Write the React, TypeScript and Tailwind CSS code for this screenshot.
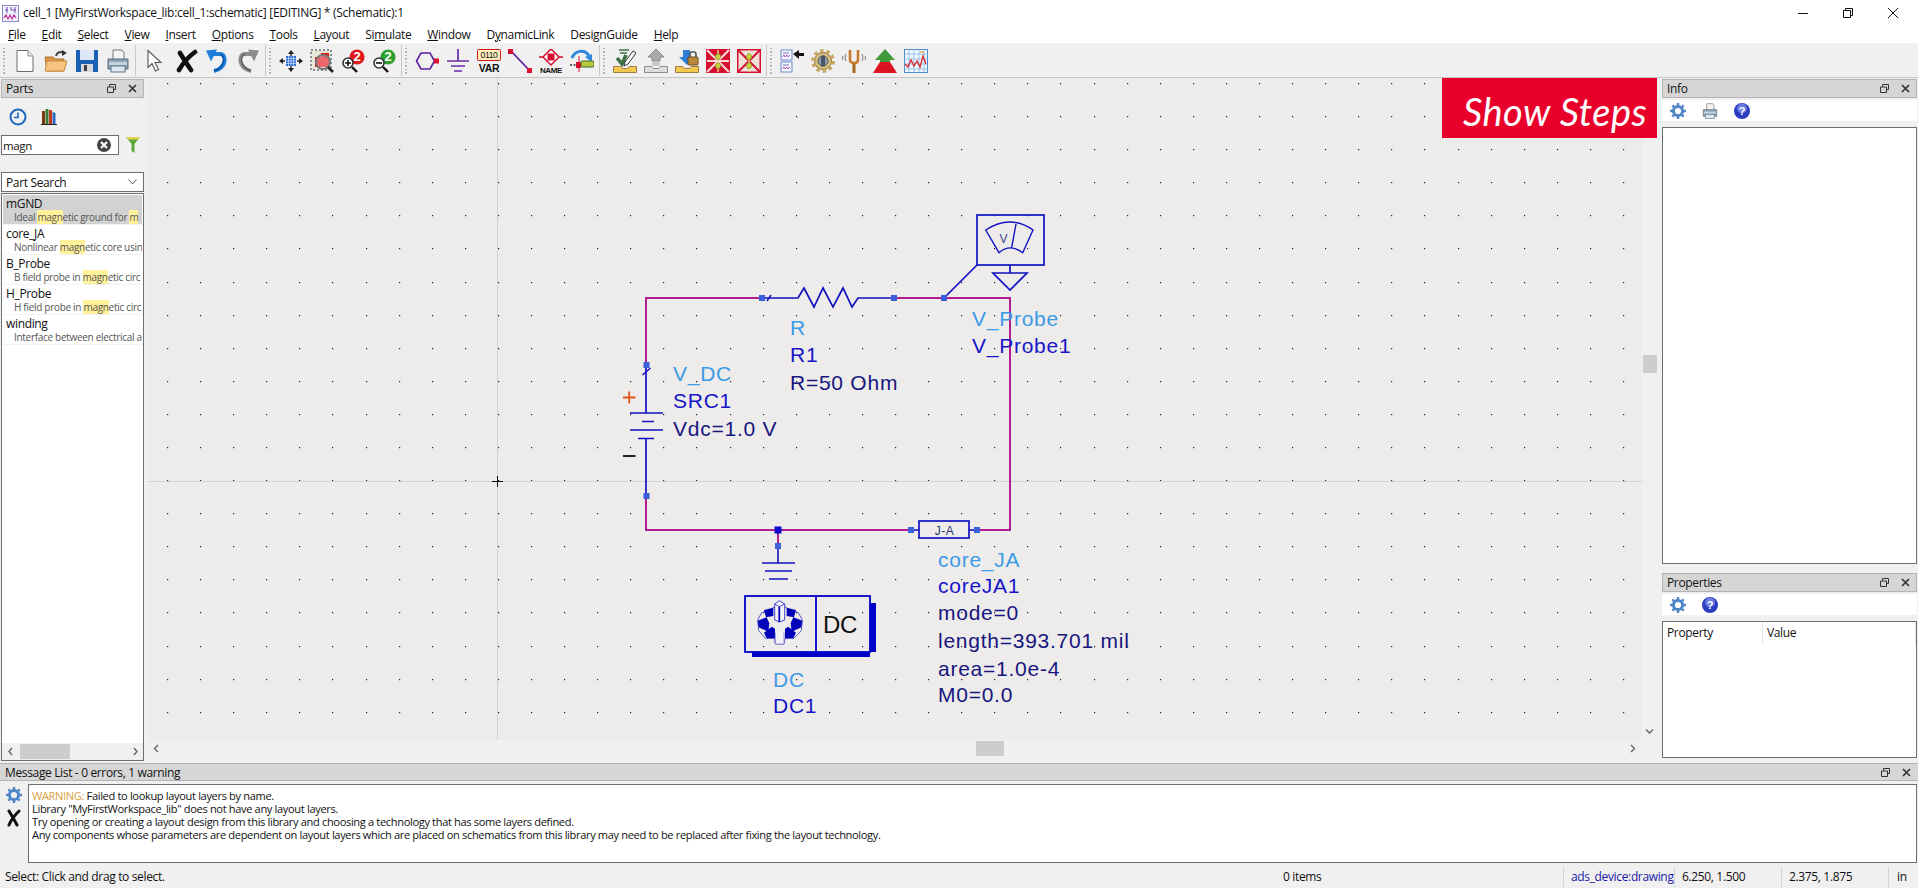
import React from "react";

const Svg = ({ children, w = 24, h = 24 }: { children: React.ReactNode; w?: number; h?: number }) => (
  <svg width={w} height={h} viewBox={`0 0 ${w} ${h}`} className="block shrink-0">{children}</svg>
);

const AppIcon = () => (
  <svg width="17" height="17" viewBox="0 0 17 17" className="block shrink-0">
    <rect x="0.5" y="0.5" width="16" height="16" fill="#eef2fb" stroke="#8a8ac8" />
    <path d="M3 5h3M5 2v6M9 2v3M9 5h5M13 2v6" stroke="#7a4ab0" strokeWidth="1" fill="none" />
    <path d="M2 13l2-3 2 4 2-4 2 4 2-4 2 3" stroke="#c0309a" strokeWidth="1.2" fill="none" />
  </svg>
);

const Doc = () => (
  <Svg>
    <path d="M4 1.5h11l5 5.5v15.5H4z" fill="#fff" stroke="#6d6d6d" />
    <path d="M15 1.5V7h5" fill="#eee" stroke="#8a8a8a" />
  </Svg>
);
const Open = () => (
  <Svg>
    <path d="M1 8h8l2 2h9v12H3z" fill="#d9964a" stroke="#a9742e" />
    <path d="M3 12h20l-3 10H1z" fill="#f6c47c" stroke="#c58a3e" />
    <path d="M12 7c1-4 5-5 8-3" stroke="#444" strokeWidth="2" fill="none" />
    <path d="M18 1l5 3-5 3z" fill="#333" />
  </Svg>
);
const Save = () => (
  <Svg>
    <path d="M1 1h22v22H1z" fill="#1a5fb4" />
    <rect x="5" y="1" width="14" height="10" fill="#dce8f5" />
    <rect x="6" y="15" width="12" height="8" fill="#d9d9d9" />
    <rect x="9" y="16" width="3" height="6" fill="#3a3a4a" />
  </Svg>
);
const Printer = ({ s = 24 }: { s?: number }) => (
  <svg width={s} height={s} viewBox="0 0 24 24" className="block shrink-0">
    <path d="M7 1h9l2 3v8H7z" fill="#f4f4f4" stroke="#777" />
    <path d="M2 10h20v10H2z" fill="#8fa3b3" stroke="#55687a" />
    <rect x="3" y="13" width="18" height="3" fill="#c7d3dc" />
    <rect x="5" y="17" width="14" height="6" fill="#dfe8ee" stroke="#5d7890" />
  </svg>
);
const Pointer = () => (
  <Svg>
    <path d="M5 1.5v17l4-4 3.5 7.5 3-1.5-3.5-7h6z" fill="#fff" stroke="#555" strokeWidth="1.1" />
  </Svg>
);
const BigX = () => (
  <Svg>
    <path d="M5 21C9 14 14 8 21 3M6 4c3 5 7 11 11 17" stroke="#111" strokeWidth="4.6" strokeLinecap="round" fill="none" />
  </Svg>
);
const Undo = ({ c = "#1c7fd8", d = "#0d4fa0", flip = false }: { c?: string; d?: string; flip?: boolean }) => (
  <Svg>
    <g transform={flip ? "translate(24 0) scale(-1 1)" : undefined}>
      <path d="M7 5h8c7 0 7 14-6 17" stroke={c} strokeWidth="4" fill="none" />
      <path d="M1 1.5l11-1-6 12z" fill={c} />
      <path d="M15 5c6 2 5 13-6 17" stroke={d} strokeWidth="1.4" fill="none" />
    </g>
  </Svg>
);
const Fit = () => (
  <Svg>
    <path d="M12 1l3 4H9zM12 23l3-4H9zM0 12l4-3v6zM24 12l-4-3v6z" fill="#222" />
    <path d="M12 4v3M12 17v3M3 12h3M18 12h3" stroke="#222" strokeWidth="1.4" />
    <rect x="7" y="7" width="10" height="10" fill="#2d6fd0" />
    <path d="M9.5 7v10M12 7v10M14.5 7v10M7 9.5h10M7 12h10M7 14.5h10" stroke="#cfe0ff" strokeWidth="0.7" />
  </Svg>
);
const ZoomArea = () => (
  <Svg>
    <rect x="1" y="1" width="20" height="20" fill="#e8e8d8" stroke="#234" strokeDasharray="2 2" />
    <path d="M5 8h6V4h8v14H5z" fill="#e0161e" />
    <circle cx="13" cy="13" r="7" fill="#ffffff" fillOpacity="0.35" stroke="#777" strokeWidth="2" />
    <path d="M18 18l5 5" stroke="#222" strokeWidth="2.6" />
  </Svg>
);
const ZoomN = ({ c, sign }: { c: string; sign: string }) => (
  <Svg>
    <circle cx="16" cy="8" r="7.6" fill={c} />
    <text x="16" y="12.4" textAnchor="middle" fontSize="13" fontWeight="700" fill="#fff" fontFamily="Liberation Sans">2</text>
    <circle cx="7" cy="14" r="5" fill="#fff" stroke="#333" strokeWidth="1.6" />
    <path d={sign === "+" ? "M4 14h6M7 11v6" : "M4 14h6"} stroke="#111" strokeWidth="1.6" />
    <path d="M11 18l5 5" stroke="#111" strokeWidth="2.4" />
  </Svg>
);
const Hex = () => (
  <Svg>
    <path d="M1.5 12l4.5-8h9l4.5 8-4.5 8H6z" fill="none" stroke="#5d1f9e" strokeWidth="1.6" />
    <rect x="19" y="9.5" width="5" height="5" fill="#e01030" />
  </Svg>
);
const Gnd = () => (
  <Svg>
    <path d="M12 0v12M1 12h22M5 17h14M8 22h8" stroke="#6a2aa8" strokeWidth="1.7" />
  </Svg>
);
const Var = () => (
  <Svg>
    <rect x="0.5" y="0.5" width="23" height="11" rx="1" fill="#ffefc0" stroke="#d01818" />
    <text x="12" y="9.4" textAnchor="middle" fontSize="8.6" fill="#111" fontFamily="Liberation Sans">0110</text>
    <text x="12" y="22.5" textAnchor="middle" fontSize="10.5" fontWeight="700" fill="#111" fontFamily="Liberation Sans">VAR</text>
  </Svg>
);
const Wire = () => (
  <Svg>
    <path d="M3 2l19 20" stroke="#5d1f9e" strokeWidth="1.8" />
    <rect x="0" y="0" width="5" height="5" fill="#e01030" />
    <rect x="19" y="19" width="5" height="5" fill="#e01030" />
  </Svg>
);
const NameI = () => (
  <Svg>
    <path d="M0 8h5M19 8h5" stroke="#d01030" strokeWidth="1.6" />
    <path d="M12 0l8 8-8 8-8-8z" fill="#fff" stroke="#d01030" strokeWidth="1.5" />
    <rect x="8.5" y="4.5" width="7" height="7" fill="#d81030" />
    <text x="12" y="23.5" textAnchor="middle" fontSize="8" fontWeight="700" fill="#111" fontFamily="Liberation Sans">NAME</text>
  </Svg>
);
const PortArrow = () => (
  <Svg>
    <path d="M2 9c3-8 13-9 17-2" stroke="#2f8ad8" strokeWidth="3" fill="none" />
    <path d="M15 8l7-3v8z" fill="#2f8ad8" />
    <path d="M0 16h8" stroke="#333" strokeWidth="1.4" strokeDasharray="2 1.5" />
    <rect x="6" y="13" width="5" height="6" fill="#d81030" />
    <path d="M9 7v16" stroke="#d81030" strokeWidth="1" />
    <rect x="11" y="12" width="13" height="6" rx="1" fill="#b8c83c" stroke="#3a6a2a" />
  </Svg>
);
const Tray = ({ c }: { c: string }) => <path d="M0.5 17.5h7l2 2h5l2-2h7v6H.5z" fill={c} stroke="#a07a4a" />;
const Check = () => (
  <Svg>
    <Tray c="#f2c84e" />
    <path d="M4 9l5 6L13 6" stroke="#3d6e45" strokeWidth="3.5" fill="none" />
    <path d="M6 1h10M7 4h7" stroke="#3d6e45" strokeWidth="1.5" />
    <path d="M12 13l8-11 3 2-8 11-4 2z" fill="#fff" stroke="#333" />
  </Svg>
);
const Up = () => (
  <Svg>
    <path d="M0.5 17.5h7l2 2h5l2-2h7v6H.5z" fill="#dcdcdc" stroke="#8f8f8f" />
    <path d="M12 0l8 8h-4v4H8V8H4z" fill="#a9a9a9" stroke="#8a8a8a" />
    <path d="M8 14h8M8 16h8" stroke="#a9a9a9" />
  </Svg>
);
const Down = () => (
  <Svg>
    <Tray c="#f2c84e" />
    <path d="M8 1h7v7h4l-7 8-8-8h4z" fill="#2f7fd8" />
    <rect x="13" y="8" width="10" height="8" rx="1" fill="#b88a3a" stroke="#6a4a1a" />
    <path d="M15 8V5c0-3 6-3 6 0v3" stroke="#555" strokeWidth="1.6" fill="none" />
  </Svg>
);
const RedBox = ({ wide }: { wide?: boolean }) => (
  <Svg>
    <rect x="0" y="0" width="24" height="24" fill="#d60f2e" />
    <rect x="1.5" y="1.5" width="21" height="21" fill={wide ? "#efe0d8" : "#d60f2e"} />
    <path d="M1 1l22 22M23 1L1 23" stroke={wide ? "#d60f2e" : "#ffd9d9"} strokeWidth="2" />
    {!wide && <path d="M1 12h22" stroke="#ffd9d9" strokeWidth="2" />}
    <path d="M12 1v22" stroke="#e8d8a0" strokeWidth="1.4" />
    <rect x="9.5" y="5" width="5" height="5.5" rx="2" fill="#c8d040" stroke="#7a8a20" strokeWidth="0.6" />
    <rect x="9.5" y="14" width="5" height="5.5" rx="2" fill="#c8d040" stroke="#7a8a20" strokeWidth="0.6" />
  </Svg>
);
const Cells = () => (
  <Svg>
    <rect x="1" y="1" width="11" height="10" fill="#f4f6ff" stroke="#6a8ac8" />
    <rect x="1" y="13" width="11" height="10" fill="#f4f6ff" stroke="#6a8ac8" />
    <path d="M2 8l2-2 1 2 2-2 1 2 2-2M2 20l2-2 1 2 2-2 1 2 2-2" stroke="#9a3aa8" fill="none" strokeWidth="0.8" />
    <path d="M3 4h6M3 16h6" stroke="#6a4ab0" strokeWidth="0.8" />
    <path d="M13 5l6-4v3h5v3h-5v3z" fill="#111" />
  </Svg>
);
const GearTan = () => (
  <Svg>
    <circle cx="12" cy="12" r="8.5" fill="#d8c080" stroke="#8a7038" strokeWidth="1" />
    <circle cx="12" cy="12" r="10.2" fill="none" stroke="#c8a860" strokeWidth="3.4" strokeDasharray="3.4 3" />
    <circle cx="12" cy="12" r="5" fill="#8f9db0" stroke="#5a5a4a" />
    <rect x="10" y="6.5" width="4" height="11" rx="1.2" fill="#49566a" />
  </Svg>
);
const Fork = () => (
  <Svg>
    <path d="M8 1v10c0 4 8 4 8 0V1" stroke="#c87a2a" strokeWidth="2.6" fill="none" />
    <path d="M12 15v9" stroke="#a8681e" strokeWidth="3" />
    <path d="M4 5c-1 2-1 5 0 7M1 7c-.6 1-.6 3 0 4M20 5c1 2 1 5 0 7M23 7c.6 1 .6 3 0 4" stroke="#888" strokeWidth="1.1" fill="none" />
  </Svg>
);
const Tree = () => (
  <Svg>
    <path d="M12 0l10 11h-5v3H7v-3H2z" fill="#3f9a3a" />
    <path d="M7 13h10l7 11H0z" fill="#e01424" />
    <path d="M4 18h16M2 21h20" stroke="#b00c18" strokeWidth="0.7" strokeDasharray="1.5 1" />
  </Svg>
);
const Graph = () => (
  <Svg>
    <rect x="0.5" y="0.5" width="23" height="23" fill="#f2f8ff" stroke="#4a8ad0" />
    <path d="M5 0v24M10 0v24M15 0v24M20 0v24M0 5h24M0 10h24M0 15h24M0 20h24" stroke="#7ab0e0" strokeWidth="0.7" />
    <path d="M1 15l3 3 3-7 3 6 3-5 3 6 3-11 3 8" stroke="#d83030" strokeWidth="1.4" fill="none" />
    <path d="M16 3h4" stroke="#d8a030" strokeWidth="1.2" />
  </Svg>
);

const Grip = () => (
  <div className="flex flex-col gap-[2px] w-[3px] ml-[3px] mr-[7px]">
    {Array.from({ length: 8 }).map((_, i) => (
      <span key={i} className="block w-[2px] h-[1.5px] bg-[#b4b4b4]" />
    ))}
  </div>
);
const Sep = () => <div className="w-px h-[31px] bg-[#c8c8c8] ml-[5px]" />;
const Ic = ({ children }: { children: React.ReactNode }) => <div className="w-6 h-6 shrink-0">{children}</div>;
const Group = ({ children }: { children: React.ReactNode }) => <div className="flex items-center gap-[7px]">{children}</div>;

const menus: [string, string, string][] = [
  ["", "F", "ile"], ["", "E", "dit"], ["", "S", "elect"], ["", "V", "iew"], ["", "I", "nsert"],
  ["", "O", "ptions"], ["", "T", "ools"], ["", "L", "ayout"], ["Si", "m", "ulate"], ["", "W", "indow"],
  ["D", "y", "namicLink"], ["DesignGuide", "", ""], ["", "H", "elp"],
];

const FloatIcon = () => (
  <svg width="9" height="9" viewBox="0 0 9 9" className="block">
    <path d="M2.5 2.5V.5h6v5h-2M.5 3h6v5.5h-6z" fill="none" stroke="#333" />
  </svg>
);
const CloseIcon = () => (
  <svg width="9" height="9" viewBox="0 0 9 9" className="block">
    <path d="M1 1l7 7M8 1L1 8" stroke="#333" strokeWidth="1.7" />
  </svg>
);
const PanelHead = ({ title, low = true }: { title: string; low?: boolean }) => (
  <div className="flex items-center h-[19px] bg-[#d6d6d6] border border-[#b4b4b4] pl-1 pr-[6px] text-[12px] text-[#111]">
    <span className={`flex-1 ${low ? "pt-[1px]" : ""}`}>{title}</span>
    <span className="mr-3"><FloatIcon /></span>
    <CloseIcon />
  </div>
);
const Gear = ({ s = 16 }: { s?: number }) => (
  <svg width={s} height={s} viewBox="0 0 16 16" className="block shrink-0">
    <circle cx="8" cy="8" r="4.6" fill="none" stroke="#4f86c6" strokeWidth="3" />
    <path d="M8 0v3M8 13v3M0 8h3M13 8h3M2.3 2.3l2.2 2.2M11.5 11.5l2.2 2.2M13.7 2.3l-2.2 2.2M4.5 11.5l-2.2 2.2" stroke="#4f86c6" strokeWidth="2.4" />
  </svg>
);
const Help = () => (
  <svg width="16" height="16" viewBox="0 0 16 16" className="block shrink-0">
    <circle cx="8" cy="8" r="8" fill="#2a3cc0" />
    <circle cx="8" cy="5.5" r="5" fill="#6a7ae0" />
    <text x="8" y="12" textAnchor="middle" fontSize="11" fontWeight="700" fill="#fff" fontFamily="Liberation Sans">?</text>
  </svg>
);

const parts: { n: string; pre: string; hi: string; post: string; post2?: string }[] = [
  { n: "mGND", pre: "Ideal ", hi: "magn", post: "etic ground for ", post2: "m" },
  { n: "core_JA", pre: "Nonlinear ", hi: "magn", post: "etic core usin" },
  { n: "B_Probe", pre: "B field probe in ", hi: "magn", post: "etic circ" },
  { n: "H_Probe", pre: "H field probe in ", hi: "magn", post: "etic circ" },
  { n: "winding", pre: "Interface between electrical a", hi: "", post: "" },
];

const dots: [number, number][] = [];
for (let i = 0; i < 46; i++) for (let j = 0; j < 20; j++) dots.push([Math.round(167 + 33.09 * i), Math.round(83 + 33.09 * j)]);

const BLUE = "#1212c0";
const WIRE = "#b01e90";
const PIN = "#3a5fd8";
const Pin = ({ x, y, c = PIN }: { x: number; y: number; c?: string }) => <rect x={x - 3} y={y - 3} width="6" height="6" fill={c} />;

const Lab = ({ x, y, c, t }: { x: number; y: number; c: string; t: string }) => (
  <text x={x} y={y} fill={c} fontSize="21" letterSpacing="0.75" fontFamily="Liberation Sans">{t}</text>
);
const L1 = "#3c9be6";
const L2 = "#1616c8";
const L3 = "#16167e";

const Schematic = () => (
  <svg viewBox="148 78 1494 662" className="absolute inset-0 w-full h-full">
    {dots.map(([x, y], i) => <rect key={i} x={x} y={y} width="1.2" height="1.2" fill="#222" />)}
    <path d="M148 481.5H1642M497.5 78V740" stroke="#d2d0d0" strokeWidth="1" />
    <path d="M492 481.5h11M497.5 476v11" stroke="#111" strokeWidth="1" />

    <path d="M646 365V298H762M894 298H1010V530H977M911 530H646V496M778 530V546" fill="none" stroke={WIRE} strokeWidth="2" />
    <path d="M762 298H798L804 288L814 307L823 288L833 307L843 288L852 307L858 298H894" fill="none" stroke={BLUE} strokeWidth="1.7" />
    <path d="M767 301L771 295M642.5 375L650.5 368" stroke={BLUE} strokeWidth="1.5" />
    <path d="M944 298L977 265" stroke={BLUE} strokeWidth="1.7" />
    <rect x="977" y="215" width="67" height="50" fill="none" stroke={BLUE} strokeWidth="1.7" />
    <path d="M985.7 230Q1010 214 1033 230L1022.7 252.7Q1010 243 999 252.7ZM1016 224L1011.7 247.7" fill="none" stroke={BLUE} strokeWidth="1.4" />
    <text x="999.5" y="243" fontSize="12" fill="#3a4a8a" fontFamily="Liberation Sans">V</text>
    <path d="M1010 265V273M993 273H1027L1010 290Z" fill="none" stroke={BLUE} strokeWidth="1.7" />

    <path d="M646 365V413M630 413H663M642 421.5H654M630 430H663M638 438.5H654M646 438.5V496" fill="none" stroke={BLUE} strokeWidth="1.7" />
    <path d="M623 397.5H635.5M629.2 391.5V403.5" stroke="#e2541c" strokeWidth="1.8" />
    <path d="M623 456H635.5" stroke="#222" strokeWidth="2" />

    <path d="M911 530H919M969 530H977" stroke={BLUE} strokeWidth="1.7" />
    <rect x="919" y="521" width="50" height="17" fill="none" stroke={BLUE} strokeWidth="1.7" />
    <text x="944.5" y="534.5" textAnchor="middle" fontSize="12" letterSpacing="0.5" fill="#2a3a6a" fontFamily="Liberation Sans">J-A</text>

    <path d="M778 546V563M762 563H795M765 571H792M769 579H788" fill="none" stroke={BLUE} strokeWidth="1.6" />

    <path d="M752 652H876V603H870V657H752Z" fill="#0000c8" />
    <rect x="745" y="596" width="125" height="56" fill="none" stroke="#0000c8" strokeWidth="1.8" />
    <path d="M816 596V652" stroke="#0000c8" strokeWidth="1.8" />
    <text x="823" y="633" fontSize="24" fill="#111" fontFamily="Liberation Sans">DC</text>
    <g transform="translate(720 510) scale(0.3333)">
      <path d="M113 330L125 308L150 300L164 290L194 290L210 300L235 308L247 330L244 362L222 385L195 385L192 402H166L163 385L136 385L116 362Z" fill="none" stroke="#3a3ad0" strokeWidth="2.4" />
      <path d="M132 300L160 293L160 318L138 322ZM228 300L200 293L200 318L222 322Z" fill="#0000b8" />
      <path d="M113 332L140 322L148 340L145 365L116 352ZM247 332L220 322L212 340L215 365L244 352Z" fill="#0000b8" />
      <path d="M132 368L155 350L165 356L165 385L140 385ZM228 368L205 350L195 356L195 385L220 385Z" fill="#0000b8" />
      <path d="M164 282L178 272L194 282V330L178 336L164 330Z" fill="#f4f2f6" stroke="#2a2ac8" strokeWidth="2.6" />
      <path d="M164 282L178 290L194 282M178 290V336" fill="none" stroke="#2a2ac8" strokeWidth="2.6" />
      <path d="M178 290V336" stroke="#0000b8" strokeWidth="5" />
      <path d="M166 368V402H192V368" fill="#f4f2f6" stroke="#7a7ad8" strokeWidth="2.4" />
    </g>

    <Pin x={762} y={298} />
    <Pin x={894} y={298} />
    <Pin x={944} y={298} />
    <Pin x={646.5} y={365} />
    <Pin x={646.5} y={496} />
    <Pin x={911} y={530} />
    <Pin x={977} y={530} />
    <rect x="774.5" y="526.5" width="7" height="7" fill="#0a0ad0" />
    <Pin x={778} y={546} />

    <Lab x={673} y={381} c={L1} t="V_DC" />
    <Lab x={673} y={408} c={L2} t="SRC1" />
    <Lab x={673} y={436} c={L3} t="Vdc=1.0 V" />
    <Lab x={790} y={335} c={L1} t="R" />
    <Lab x={790} y={362} c={L2} t="R1" />
    <Lab x={790} y={390} c={L3} t="R=50 Ohm" />
    <Lab x={972} y={326} c={L1} t="V_Probe" />
    <Lab x={972} y={353} c={L2} t="V_Probe1" />
    <Lab x={938} y={567} c={L1} t="core_JA" />
    <Lab x={938} y={593} c={L2} t="coreJA1" />
    <Lab x={938} y={620} c={L3} t="mode=0" />
    <Lab x={938} y={648} c={L3} t="length=393.701 mil" />
    <Lab x={938} y={676} c={L3} t="area=1.0e-4" />
    <Lab x={938} y={702} c={L3} t="M0=0.0" />
    <Lab x={773} y={687} c={L1} t="DC" />
    <Lab x={773} y={713} c={L2} t="DC1" />
  </svg>
);

export default function App() {
  return (
    <div className="w-[1918px] h-[888px] overflow-hidden flex flex-col bg-[#f0f0f0] font-['Open_Sans',sans-serif] text-[#111] tracking-[-0.35px]">
      {/* title */}
      <div className="h-[26px] bg-white flex items-center pl-[2px] shrink-0">
        <AppIcon />
        <span className="ml-1 text-[12px] tracking-[-0.28px]">cell_1 [MyFirstWorkspace_lib:cell_1:schematic] [EDITING] * (Schematic):1</span>
        <div className="ml-auto flex items-center gap-[35px] pr-[20px]">
          <svg width="10" height="10" viewBox="0 0 10 10" className="block"><path d="M0 5.5h10" stroke="#111" /></svg>
          <svg width="10" height="10" viewBox="0 0 10 10" className="block"><path d="M.5 2.5h7v7h-7zM2.5 2.5v-2h7v7h-2" fill="none" stroke="#111" /></svg>
          <svg width="10" height="10" viewBox="0 0 10 10" className="block"><path d="M0 0l10 10M10 0L0 10" stroke="#111" /></svg>
        </div>
      </div>
      {/* menu */}
      <div className="h-[18px] bg-white flex items-center text-[12px] shrink-0 border-b border-[#f2f2f2]">
        {menus.map(([a, u, b]) => (
          <span key={a + u + b} className="px-2">
            {a}<u>{u}</u>{b}
          </span>
        ))}
      </div>
      {/* toolbar */}
      <div className="h-[34px] bg-[#f0f0f0] border-b border-[#c6c6c6] flex items-center shrink-0">
        <Grip />
        <Group><Ic><Doc /></Ic><Ic><Open /></Ic><Ic><Save /></Ic><Ic><Printer /></Ic></Group>
        <Sep />
        <div className="w-[7px]" />
        <Group><Ic><Pointer /></Ic><Ic><BigX /></Ic><Ic><Undo /></Ic><Ic><Undo c="#8c8c8c" d="#5f5f5f" flip /></Ic></Group>
        <Sep /><Grip />
        <Group><Ic><Fit /></Ic><Ic><ZoomArea /></Ic><Ic><ZoomN c="#e01a1a" sign="+" /></Ic><Ic><ZoomN c="#2fa02f" sign="-" /></Ic></Group>
        <Sep /><Grip />
        <Group><Ic><Hex /></Ic><Ic><Gnd /></Ic><Ic><Var /></Ic><Ic><Wire /></Ic><Ic><NameI /></Ic><Ic><PortArrow /></Ic></Group>
        <Sep /><Grip />
        <Group><Ic><Check /></Ic><Ic><Up /></Ic><Ic><Down /></Ic><Ic><RedBox /></Ic><Ic><RedBox wide /></Ic></Group>
        <Sep /><Grip />
        <Group><Ic><Cells /></Ic><Ic><GearTan /></Ic><Ic><Fork /></Ic><Ic><Tree /></Ic><Ic><Graph /></Ic></Group>
      </div>

      {/* main */}
      <div className="flex h-[683px] shrink-0 relative">
        {/* left */}
        <div className="w-[148px] shrink-0 flex flex-col pl-[1px] pr-1 pt-[1px]">
          <PanelHead title="Parts" />
          <div className="flex items-center h-[37px] pl-[8px] gap-[13px] shrink-0">
            <svg width="18" height="18" viewBox="0 0 18 18" className="block">
              <circle cx="9" cy="9" r="7.5" fill="none" stroke="#1f68c0" strokeWidth="2" />
              <path d="M9 4.5V9.5H5" fill="none" stroke="#1f68c0" strokeWidth="1.6" />
            </svg>
            <svg width="18" height="18" viewBox="0 0 18 18" className="block">
              <path d="M2 3h3v13H2z" fill="#7a3a10" /><path d="M5.5 1h3v15h-3z" fill="#3a7a3a" /><path d="M9 2h3v14H9z" fill="#c03a1a" /><path d="M12.5 4l3 1v11h-3z" fill="#2a6ac0" />
              <path d="M1 16.5h16" stroke="#222" />
            </svg>
          </div>
          <div className="flex items-center shrink-0 h-[20px]">
            <div className="w-[118px] h-[20px] bg-white border border-[#6e6e6e] flex items-center text-[11.5px] pl-[1px]">
              <span className="flex-1 pt-[1px]">magn</span>
              <svg width="14" height="14" viewBox="0 0 14 14" className="block mr-[7px]">
                <circle cx="7" cy="7" r="7" fill="#444" />
                <path d="M4 4l6 6M10 4l-6 6" stroke="#fff" strokeWidth="2" />
              </svg>
            </div>
            <svg width="14" height="18" viewBox="0 0 14 18" className="block ml-[7px]">
              <path d="M0 1h14L8.5 8v9l-3-2V8z" fill="#5aa838" /><path d="M0 1h14l-2 2.5H2z" fill="#e8d050" />
            </svg>
          </div>
          <div className="h-[17px] shrink-0" />
          <div className="h-[20px] shrink-0 bg-white border border-[#6e6e6e] flex items-center px-1 text-[12px]">
            <span className="flex-1 pt-[1px]">Part Search</span>
            <svg width="9" height="6" viewBox="0 0 9 6" className="block mr-[2px]"><path d="M.5.5L4.5 5 8.5.5" fill="none" stroke="#666" /></svg>
          </div>
          <div className="mt-[1px] flex-1 bg-white border border-[#6e6e6e] flex flex-col min-h-0">
            <div className="flex-1 overflow-hidden pt-[1px] px-[1px]">
              {parts.map((p, i) => (
                <div key={p.n} className={`h-[30px] overflow-hidden pl-[3px] flex flex-col border-b border-[#f2f2f2] ${i === 0 ? "bg-[#d2d2d2]" : ""}`}>
                  <span className="text-[12px] leading-[16px] mt-[1px] whitespace-nowrap">{p.n}</span>
                  <span className="text-[10px] leading-[11px] pl-[8px] whitespace-nowrap text-[#555] tracking-[-0.3px]">
                    {p.pre}
                    {p.hi && <span className="bg-[#fff29a]">{p.hi}</span>}
                    {p.post}
                    {p.post2 && <span className="bg-[#fff29a]">{p.post2}</span>}
                  </span>
                </div>
              ))}
            </div>
            <div className="h-[17px] flex items-center bg-[#f0f0f0] shrink-0 pr-[3px]">
              <svg width="10" height="9" viewBox="0 0 10 9" className="block ml-[4px]"><path d="M6 1L3 4.5 6 8" fill="none" stroke="#666" strokeWidth="1.4" /></svg>
              <div className="w-[50px] h-[15px] bg-[#cdcdcd] ml-[4px]" />
              <svg width="10" height="9" viewBox="0 0 10 9" className="block ml-auto"><path d="M4 1l3 3.5L4 8" fill="none" stroke="#666" strokeWidth="1.4" /></svg>
            </div>
          </div>
        </div>

        {/* centre */}
        <div className="w-[1512px] shrink-0 flex flex-col">
          <div className="flex h-[662px] shrink-0">
            <div className="w-[1494px] h-[662px] relative bg-[#eeebeb] shrink-0 overflow-hidden">
              <Schematic />
            </div>
            <div className="w-[15px] relative flex flex-col items-center">
              <div className="w-[14px] h-[18px] bg-[#cdcdcd] mt-[277px]" />
              <svg width="9" height="6" viewBox="0 0 9 6" className="block mt-auto mb-[5px]"><path d="M1 .5L4.5 4 8 .5" fill="none" stroke="#666" strokeWidth="1.4" /></svg>
            </div>
          </div>
          <div className="h-[16px] w-[1494px] flex items-center relative">
            <svg width="9" height="9" viewBox="0 0 9 9" className="block ml-[4px]"><path d="M6 1L2.5 4.5 6 8" fill="none" stroke="#666" strokeWidth="1.4" /></svg>
            <div className="w-[28px] h-[15px] bg-[#cdcdcd] ml-[815px]" />
            <svg width="9" height="9" viewBox="0 0 9 9" className="block ml-auto mr-[5px]"><path d="M3 1l3.5 3.5L3 8" fill="none" stroke="#666" strokeWidth="1.4" /></svg>
          </div>
        </div>

        {/* right */}
        <div className="flex-1 flex flex-col pt-[1px] pr-[1px] pl-[2px]">
          <PanelHead title="Info" />
          <div className="h-[21px] mt-[2px] bg-white flex items-center pl-2 gap-[16px] shrink-0">
            <Gear /><Printer s={16} /><Help />
          </div>
          <div className="mt-[6px] h-[437px] bg-white border border-[#6e6e6e] shrink-0" />
          <div className="h-[9px] shrink-0" />
          <PanelHead title="Properties" low={false} />
          <div className="h-[21px] mt-[2px] bg-white flex items-center pl-2 gap-[16px] shrink-0">
            <Gear /><Help />
          </div>
          <div className="mt-[6px] h-[137px] bg-white border border-[#6e6e6e] shrink-0 text-[12px]">
            <div className="flex h-[23px] items-center pb-[1px]">
              <span className="w-[100px] pl-1 h-full flex items-center border-r border-[#e4e4e4]">Property</span>
              <span className="pl-1 flex-1 h-full flex items-center border-r border-[#e4e4e4]">Value</span>
            </div>
          </div>
        </div>

        {/* Show steps */}
        <div className="absolute left-[1442px] top-0 w-[215px] h-[60px] bg-[#e8002b] flex items-center pl-[21px] pt-[6px] text-white text-[38px] italic font-['Lato',sans-serif] tracking-[0.5px] font-normal whitespace-nowrap">
          Show Steps
        </div>
      </div>

      {/* message list */}
      <div className="mt-[2px] shrink-0 h-[18px] bg-[#d6d6d6] border-y border-[#b4b4b4] flex items-center pl-[5px] pr-[7px] text-[12px]">
        <span className="flex-1 pt-[1px]">Message List - 0 errors, 1 warning</span>
        <span className="mr-3"><FloatIcon /></span>
        <CloseIcon />
      </div>
      <div className="h-[82px] shrink-0 flex pt-[3px] pr-[1px]">
        <div className="w-[28px] shrink-0 flex flex-col items-center pt-[3px] pr-[1px] gap-[6px]">
          <Gear />
          <svg width="16" height="18" viewBox="0 0 16 18" className="block">
            <path d="M3 2C6 7 9 12 11 16M13 2C9 6 5 11 3 16" stroke="#111" strokeWidth="3" fill="none" strokeLinecap="round" />
          </svg>
        </div>
        <div className="flex-1 bg-white border border-[#6e6e6e] pl-[3px] pt-[4px] text-[11.08px] leading-[13px]">
          <div><span className="text-[#d8a040]">WARNING:</span> Failed to lookup layout layers by name.</div>
          <div>Library "MyFirstWorkspace_lib" does not have any layout layers.</div>
          <div>Try opening or creating a layout design from this library and choosing a technology that has some layers defined.</div>
          <div>Any components whose parameters are dependent on layout layers which are placed on schematics from this library may need to be replaced after fixing the layout technology.</div>
        </div>
      </div>
      {/* status */}
      <div className="h-[25px] shrink-0 flex items-center text-[12px] pt-[2px]">
        <span className="w-[1270px] pl-[5px]">Select: Click and drag to select.</span>
        <span className="w-[293px] pl-[13px] h-[20px] flex items-center">0 items</span>
        <span className="w-[111px] pl-[7px] h-[20px] flex items-center border-l border-[#d4d4d4] text-[#1a1aa8] whitespace-nowrap">ads_device:drawing</span>
        <span className="w-[107px] pl-[7px] h-[20px] flex items-center border-l border-[#d4d4d4]">6.250, 1.500</span>
        <span className="w-[107px] pl-[7px] h-[20px] flex items-center border-l border-[#d4d4d4]">2.375, 1.875</span>
        <span className="flex-1 pl-[8px] h-[20px] flex items-center border-l border-[#d4d4d4]">in</span>
      </div>
    </div>
  );
}
